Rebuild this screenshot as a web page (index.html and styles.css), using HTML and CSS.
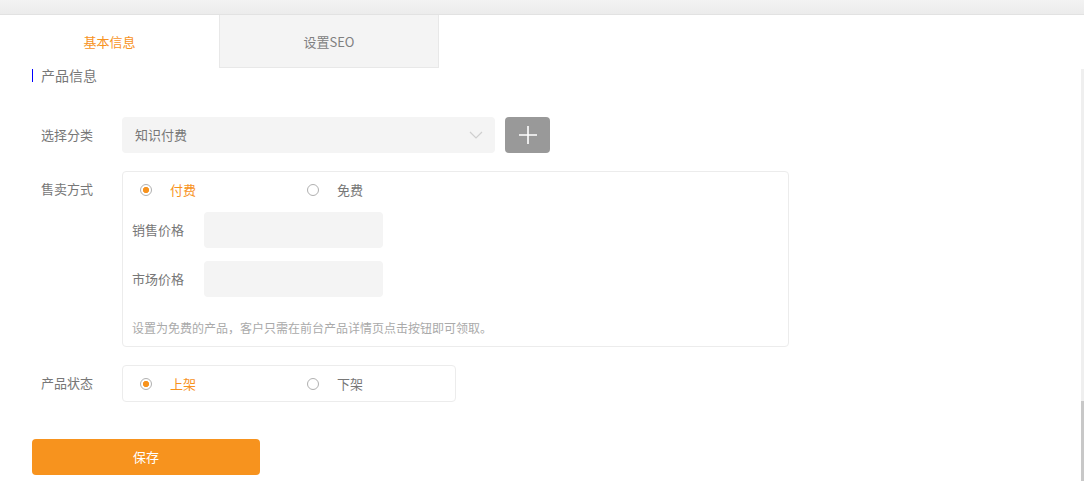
FILE: index.html
```html
<!DOCTYPE html>
<html lang="zh-CN">
<head>
<meta charset="utf-8">
<title>产品信息</title>
<link rel="stylesheet" href="styles.css">
</head>
<body>
<div class="topbar"></div>
<div class="tabs">
  <div class="tab tab-active">基本信息</div>
  <div class="tab tab-idle">设置SEO</div>
</div>
<div class="section-title">产品信息</div>
<div class="form">
  <div class="row">
    <div class="label">选择分类</div>
    <div class="select">
      <span>知识付费</span>
      <svg class="chevron" width="14" height="8" viewBox="0 0 14 8"><path d="M1 1 L7 7 L13 1" fill="none" stroke="#cfcfcf" stroke-width="1.2"/></svg>
    </div>
    <div class="add-btn">
      <svg width="20" height="20" viewBox="0 0 20 20"><path d="M10 1 V19 M1 10 H19" stroke="#fff" stroke-width="1.6"/></svg>
    </div>
  </div>
  <div class="row row-gap">
    <div class="label">售卖方式</div>
    <div class="box box-wide">
      <div class="radios">
        <div class="option"><span class="radio checked"></span><span class="opt-text on">付费</span></div>
        <div class="option"><span class="radio"></span><span class="opt-text">免费</span></div>
      </div>
      <div class="price price-first">
        <div class="price-label">销售价格</div>
        <div class="input"></div>
      </div>
      <div class="price price-second">
        <div class="price-label">市场价格</div>
        <div class="input"></div>
      </div>
      <div class="hint">设置为免费的产品，客户只需在前台产品详情页点击按钮即可领取。</div>
    </div>
  </div>
  <div class="row row-gap">
    <div class="label">产品状态</div>
    <div class="box box-narrow">
      <div class="radios">
        <div class="option"><span class="radio checked"></span><span class="opt-text on">上架</span></div>
        <div class="option"><span class="radio"></span><span class="opt-text">下架</span></div>
      </div>
    </div>
  </div>
  <div class="save">保存</div>
</div>
<div class="scroll-track"><div class="scroll-thumb"></div></div>
</body>
</html>
```

FILE: styles.css
```css
html, body {
  margin: 0;
  padding: 0;
  background: #fff;
}
body {
  position: relative;
  height: 481px;
  overflow: hidden;
  font-family: "Noto Sans CJK SC", "Microsoft YaHei", "Liberation Sans", sans-serif;
  font-size: 13px;
  color: #777;
}
.topbar {
  height: 14px;
  background: linear-gradient(#f3f3f3, #ececec);
  border-bottom: 1px solid #e2e2e2;
}
.tabs {
  display: flex;
  height: 53px;
}
.tab {
  width: 219px;
  display: flex;
  align-items: center;
  justify-content: center;
  font-size: 13px;
  box-sizing: border-box;
}
.tab-active {
  color: #f7931e;
}
.tab-idle {
  width: 220px;
  background: #f4f4f4;
  border: 1px solid #e8e8e8;
  border-top: none;
  color: #808080;
}
.section-title {
  margin: 1px 0 0 32px;
  border-left: 1px solid #0000ff;
  padding-left: 8px;
  height: 13px;
  line-height: 13px;
  font-size: 14px;
  color: #777;
}
.form {
  margin: 35px 0 0 32px;
}
.row {
  display: flex;
  align-items: flex-start;
}
.row-gap {
  margin-top: 18px;
}
.label {
  width: 90px;
  box-sizing: border-box;
  padding-left: 9px;
  line-height: 36px;
  color: #777;
}
.select {
  position: relative;
  width: 373px;
  height: 36px;
  box-sizing: border-box;
  padding-left: 13px;
  line-height: 36px;
  background: #f4f4f4;
  border-radius: 4px;
  color: #777;
}
.chevron {
  position: absolute;
  right: 12px;
  top: 14px;
}
.add-btn {
  margin-left: 10px;
  width: 45px;
  height: 36px;
  border-radius: 4px;
  background: #999;
  display: flex;
  align-items: center;
  justify-content: center;
}
.box {
  border: 1px solid #ececec;
  border-radius: 4px;
  box-sizing: border-box;
}
.box-wide {
  width: 667px;
  padding-bottom: 8px;
}
.box-narrow {
  width: 334px;
}
.radios {
  height: 35px;
  display: flex;
  align-items: center;
  padding-left: 17px;
}
.option {
  width: 167px;
  flex-shrink: 0;
  display: flex;
  align-items: center;
}
.radio {
  width: 12px;
  height: 12px;
  flex-shrink: 0;
  box-sizing: border-box;
  border: 1px solid #b0b0b0;
  border-radius: 50%;
  background: #fff;
  margin-right: 18px;
}
.radio.checked {
  background: radial-gradient(circle, #f7931e 0 2.8px, #fff 3.4px);
}
.opt-text {
  line-height: 20px;
  color: #777;
}
.opt-text.on {
  color: #f7931e;
}
.price {
  display: flex;
  padding-left: 9px;
}
.price-first {
  margin-top: 5px;
}
.price-second {
  margin-top: 13px;
}
.price-label {
  width: 72px;
  line-height: 36px;
  color: #777;
}
.input {
  width: 179px;
  height: 36px;
  background: #f4f4f4;
  border-radius: 4px;
}
.hint {
  margin-top: 21px;
  padding-left: 9px;
  line-height: 20px;
  font-size: 12px;
  color: #aaa;
}
.save {
  margin-top: 37px;
  width: 228px;
  height: 36px;
  line-height: 36px;
  text-align: center;
  background: #f7931e;
  border-radius: 4px;
  color: #fff;
}
.scroll-track {
  position: absolute;
  right: 0;
  top: 69px;
  width: 3px;
  height: 412px;
  background: #efefef;
}
.scroll-thumb {
  position: absolute;
  left: 0;
  bottom: 0;
  width: 3px;
  height: 80px;
  background: #c8c8c8;
}
```
